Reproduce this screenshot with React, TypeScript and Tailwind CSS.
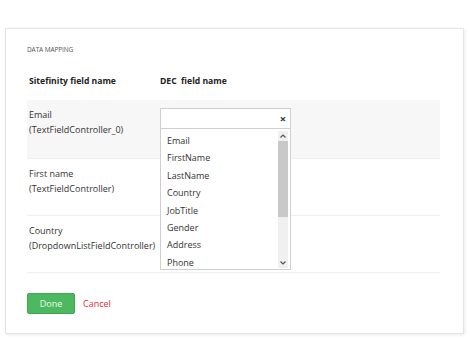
import type { ReactElement } from 'react';

interface FieldRow {
	readonly label: string;
	readonly controller: string;
	readonly shaded?: boolean;
}

const rows: FieldRow[] = [
	{ label: 'Email', controller: '(TextFieldController_0)', shaded: true },
	{ label: 'First name', controller: '(TextFieldController)' },
	{ label: 'Country', controller: '(DropdownListFieldController)' },
];

const options = ['Email', 'FirstName', 'LastName', 'Country', 'JobTitle', 'Gender', 'Address', 'Phone'];

function SelectBox({ open }: { readonly open?: boolean }): ReactElement {
	return (
		<div className="relative h-[21px] w-[131px] border border-[#cfcfcf] bg-white">
			{open ? (
				<span className="absolute right-[4px] top-[3px] text-[11px] font-bold leading-[13px] text-[#333]">
					×
				</span>
			) : null}
		</div>
	);
}

function OptionsList(): ReactElement {
	return (
		<div className="absolute left-0 top-[21px] z-10 h-[141px] w-[131px] overflow-hidden border border-t-0 border-[#cfcfcf] bg-white">
			<ul className="pt-[3px]">
				{options.map((option) => (
					<li key={option} className="h-[17.4px] pl-[6px] text-[9px] leading-[17.4px] text-[#333]">
						{option}
					</li>
				))}
			</ul>
			<div className="absolute right-[2px] top-[2px] flex h-[137px] w-[10px] flex-col bg-[#f0f0f0]">
				<div className="flex h-[10px] items-center justify-center">
					<svg width="6" height="4" viewBox="0 0 6 4">
						<path d="M0.5 3.5 L3 1 L5.5 3.5" fill="none" stroke="#555" strokeWidth="1.2" />
					</svg>
				</div>
				<div className="h-[76px] bg-[#c9c9c9]" />
				<div className="flex-1" />
				<div className="flex h-[10px] items-center justify-center">
					<svg width="6" height="4" viewBox="0 0 6 4">
						<path d="M0.5 0.5 L3 3 L5.5 0.5" fill="none" stroke="#555" strokeWidth="1.2" />
					</svg>
				</div>
			</div>
		</div>
	);
}

export default function App(): ReactElement {
	return (
		<div className="h-[360px] w-[470px] bg-white pt-[28px] pl-[5px] font-['Open_Sans',sans-serif]">
			<div className="h-[306px] w-[459px] border border-[#e4e4e4] bg-white px-[21px] pt-[17px] shadow-[1px_1px_3px_rgba(0,0,0,0.08)]">
				<p className="text-[6.5px] leading-[8px] uppercase tracking-[-0.1px] text-[#555]">Data mapping</p>

				<div className="mt-[21px] flex h-[25px] w-[413px] items-start text-[8.6px] font-bold leading-[12px] text-[#222]">
					<div className="w-[133px] pl-[2px]">Sitefinity field name</div>
					<div>DEC&nbsp; field name</div>
				</div>

				<div className="w-[413px]">
					{rows.map((row, index) => (
						<div
							key={row.label}
							className={`flex border-b border-[#efefef] ${index === 0 ? 'h-[59px] bg-[#f7f7f7]' : 'h-[57px]'}`}
						>
							<div className="w-[133px] pl-[2px] pt-[8px] text-[9px] leading-[14.5px] text-[#333]">
								<p>{row.label}</p>
								<p>{row.controller}</p>
							</div>
							<div className="relative pt-[8px]">
								<div className="relative">
									<SelectBox open={index === 0} />
									{index === 0 ? <OptionsList /> : null}
								</div>
							</div>
						</div>
					))}
				</div>

				<div className="mt-[20px] flex items-center gap-[8px]">
					<button
						type="button"
						className="h-[21px] w-[48px] rounded-[2px] border border-[#3fa653] bg-[#4cb960] text-[9px] leading-[19px] text-[#eaffee]"
					>
						Done
					</button>
					<button type="button" className="text-[9px] leading-[19px] text-[#ec2b34]">
						Cancel
					</button>
				</div>
			</div>
		</div>
	);
}
